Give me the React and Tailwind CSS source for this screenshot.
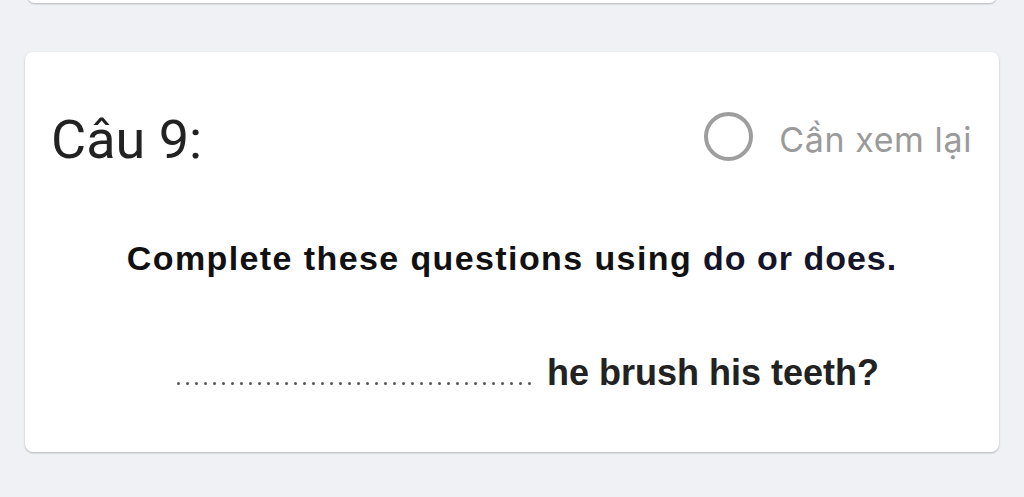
export default function App() {
  const dots = Array.from({ length: 40 });
  return (
    <div className="w-[1024px] h-[497px] overflow-hidden bg-[#f0f1f5]" style={{ fontFamily: "Inter, 'Liberation Sans', sans-serif" }}>
      <div className="mx-[27px] -mt-[20px] h-[23px] rounded-b-lg bg-white shadow-[0_1px_2px_rgba(0,0,0,0.25)]" />
      <div className="mx-[25px] mt-[49px] h-[400px] rounded-lg bg-white shadow-[0_1px_2px_rgba(0,0,0,0.25)] px-[26px] pt-[58px]">
        <div className="flex items-center justify-between h-[60px]">
          <span className="text-[54px] leading-none text-[#222]" style={{ fontFamily: "Roboto, 'Liberation Sans', sans-serif" }}>Câu 9:</span>
          <div className="flex items-center gap-[26px] pr-[1px]">
            <div className="w-[49px] h-[49px] rounded-full border-[4px] border-[#9e9e9e] -mt-[8px]" />
            <span className="text-[34px] leading-none text-[#9a9a9a] tracking-[0.6px]">Cần xem lại</span>
          </div>
        </div>
        <div className="mt-[71px] flex justify-center">
          <p className="text-[34px] leading-none font-bold text-[#111] tracking-[1.4px]" style={{ fontFamily: "'Liberation Sans', Arial, sans-serif" }}>
            Complete these questions using <span className="text-[#14142a] tracking-[1px]">do or does.</span>
          </p>
        </div>
        <div className="mt-[80px] flex items-end justify-center gap-[16px] pl-[32px]">
          <div className="flex gap-[6px] mb-[6px]">
            {dots.map((_, i) => (
              <span key={i} className="block w-[3px] h-[3px] rounded-full bg-[#555]" />
            ))}
          </div>
          <span className="text-[36px] leading-none font-bold text-[#222]" style={{ fontFamily: "'Liberation Sans', Arial, sans-serif" }}>
            he brush his teeth?
          </span>
        </div>
      </div>
    </div>
  );
}
